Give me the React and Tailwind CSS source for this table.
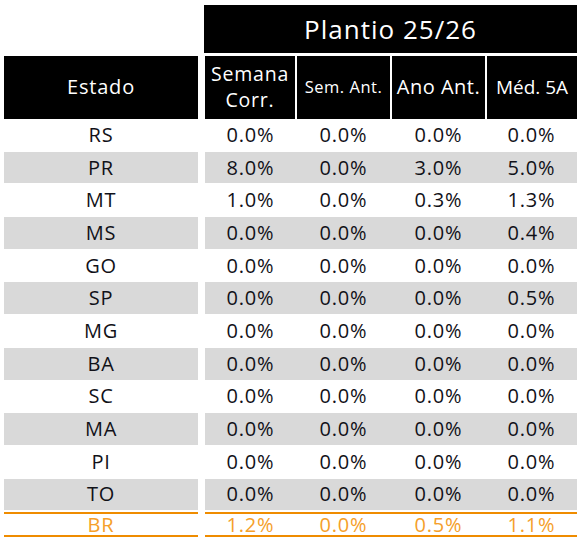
import React from "react";

const rows = [
  ["RS", "0.0%", "0.0%", "0.0%", "0.0%"],
  ["PR", "8.0%", "0.0%", "3.0%", "5.0%"],
  ["MT", "1.0%", "0.0%", "0.3%", "1.3%"],
  ["MS", "0.0%", "0.0%", "0.0%", "0.4%"],
  ["GO", "0.0%", "0.0%", "0.0%", "0.0%"],
  ["SP", "0.0%", "0.0%", "0.0%", "0.5%"],
  ["MG", "0.0%", "0.0%", "0.0%", "0.0%"],
  ["BA", "0.0%", "0.0%", "0.0%", "0.0%"],
  ["SC", "0.0%", "0.0%", "0.0%", "0.0%"],
  ["MA", "0.0%", "0.0%", "0.0%", "0.0%"],
  ["PI", "0.0%", "0.0%", "0.0%", "0.0%"],
  ["TO", "0.0%", "0.0%", "0.0%", "0.0%"],
];

const total = ["BR", "1.2%", "0.0%", "0.5%", "1.1%"];

// widths of the value cells (gaps folded in)
const valWidths = ["w-[91px]", "w-[95px]", "w-[95px]", "w-[91px]"];

const Row = ({ cells, striped }) => {
  const bg = striped ? "bg-[#d9d9d9]" : "bg-white";
  return (
    <div className="flex h-[32.7px] py-[0.5px]">
      <div className={`ml-[4px] w-[194px] ${bg} flex items-center justify-center`}>{cells[0]}</div>
      <div className={`ml-[7px] flex ${bg}`}>
        {cells.slice(1).map((v, i) => (
          <div key={i} className={`${valWidths[i]} flex items-center justify-center`}>
            {v}
          </div>
        ))}
      </div>
    </div>
  );
};

export default function App() {
  return (
    <div className="w-[577px] h-[538px] bg-white pt-[5px] font-['Open_Sans',sans-serif] text-[20px] tracking-[0.8px] text-[#111118] overflow-hidden">
      {/* title bar */}
      <div className="flex">
        <div className="ml-[204px] w-[373px] h-[48px] bg-black text-white text-[26px] tracking-[1px] flex items-center justify-center">
          Plantio 25/26
        </div>
      </div>

      {/* column headers */}
      <div className="mt-[3px] flex h-[62.5px] text-white">
        <div className="ml-[4px] w-[194px] bg-black flex items-center justify-center">Estado</div>
        <div className="ml-[7px] w-[90px] bg-black flex flex-col items-center justify-center text-[19.5px] leading-[26px]">
          <span>Semana</span>
          <span>Corr.</span>
        </div>
        <div className="ml-[2px] w-[93px] bg-black flex items-center justify-center text-[16.5px] tracking-[0.5px]">Sem. Ant.</div>
        <div className="ml-[2px] w-[93px] bg-black flex items-center justify-center tracking-[0.5px]">Ano Ant.</div>
        <div className="ml-[2px] w-[90px] bg-black flex items-center justify-center text-[19px] tracking-[0px]">Méd. 5A</div>
      </div>

      {/* data */}
      <div className="flex flex-col">
        {rows.map((r, i) => (
          <Row key={r[0]} cells={r} striped={i % 2 === 1} />
        ))}
      </div>

      {/* total row */}
      <div className="mt-[1px] flex text-[#f5a02a]">
        <div className="ml-[4px] w-[194px] h-[25.6px] border-y-2 border-[#ef8c00] flex items-center justify-center">
          {total[0]}
        </div>
        <div className="ml-[7px] flex h-[25.6px] border-y-2 border-[#ef8c00]">
          {total.slice(1).map((v, i) => (
            <div key={i} className={`${valWidths[i]} flex items-center justify-center`}>
              {v}
            </div>
          ))}
        </div>
      </div>
    </div>
  );
}
